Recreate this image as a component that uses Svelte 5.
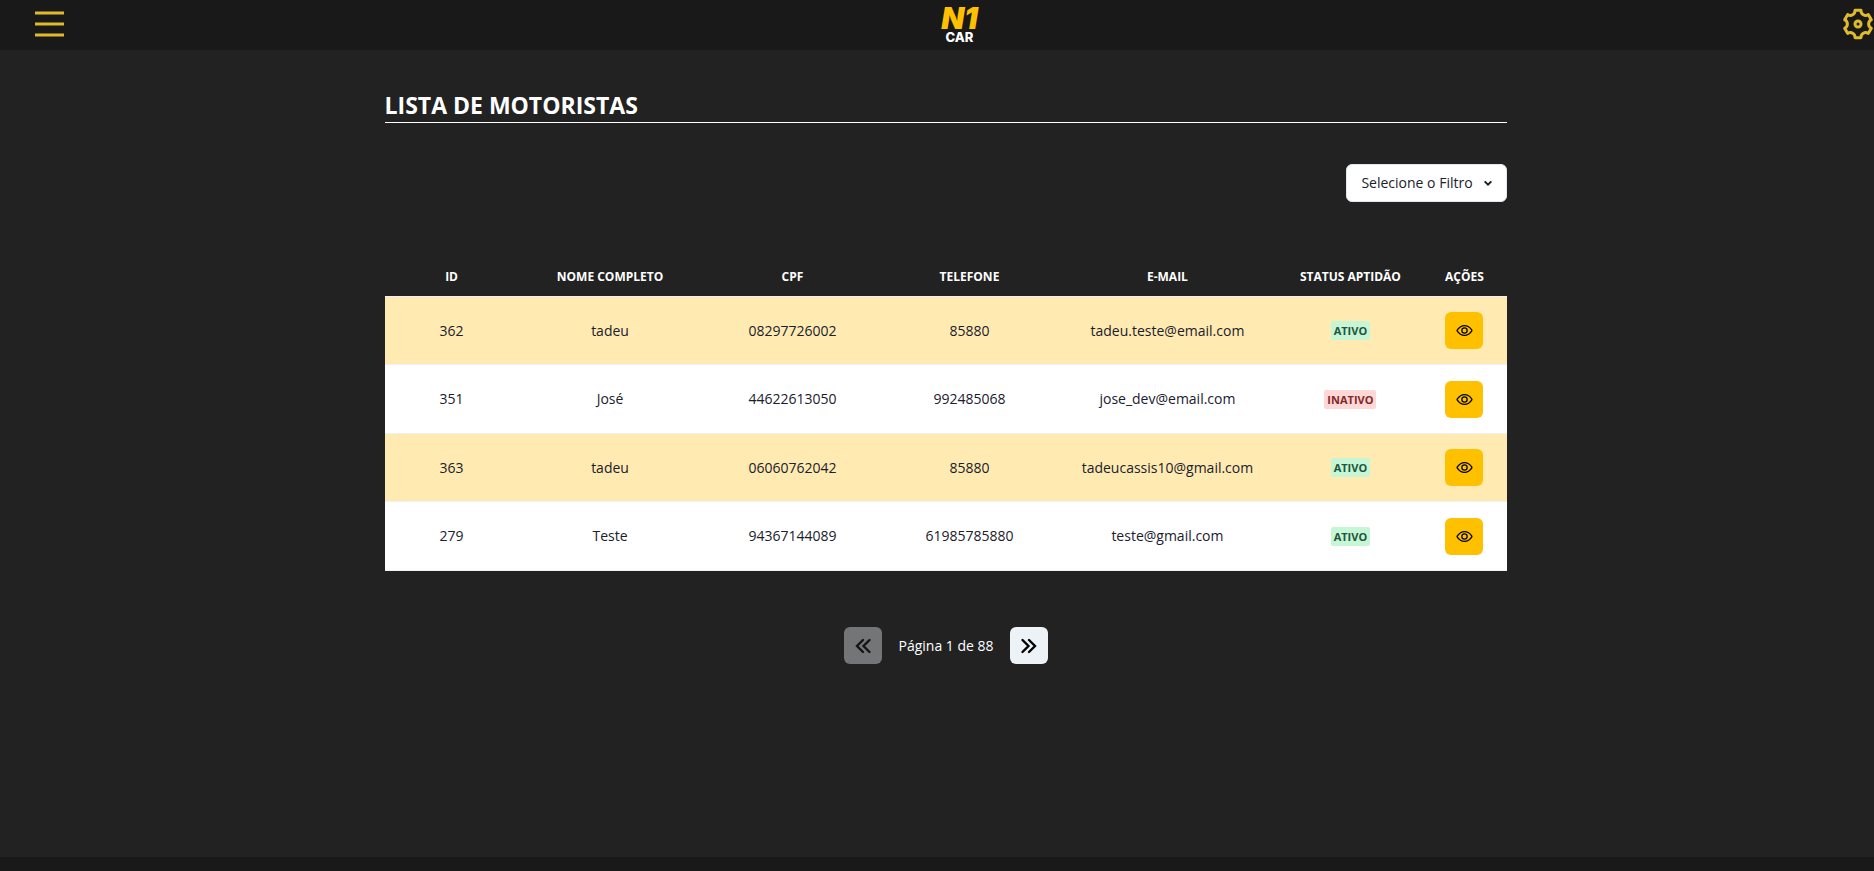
<script>
  const drivers = [
    { id: 362, name: 'tadeu', cpf: '08297726002', phone: '85880', email: 'tadeu.teste@email.com', active: true },
    { id: 351, name: 'José', cpf: '44622613050', phone: '992485068', email: 'jose_dev@email.com', active: false },
    { id: 363, name: 'tadeu', cpf: '06060762042', phone: '85880', email: 'tadeucassis10@gmail.com', active: true },
    { id: 279, name: 'Teste', cpf: '94367144089', phone: '61985785880', email: 'teste@gmail.com', active: true },
  ];
  const columns = [
    ['ID', 134],
    ['Nome completo', 183],
    ['CPF', 182],
    ['Telefone', 172],
    ['E-mail', 224],
    ['Status aptidão', 142],
    ['Ações', 86],
  ];
  const total = columns.reduce((sum, [, weight]) => sum + weight, 0);

  // Six-toothed gear outline centred on (16, 16)
  function polar(radius, degrees) {
    const a = (degrees * Math.PI) / 180;
    return `${(16 + radius * Math.cos(a)).toFixed(2)} ${(16 + radius * Math.sin(a)).toFixed(2)}`;
  }
  let gear = `M${polar(14, -102)}`;
  for (let t = -90; t < 270; t += 60) {
    gear += `L${polar(14, t + 12)}C${polar(10, t + 17)} ${polar(10, t + 43)} ${polar(14, t + 48)}`;
  }
  gear += 'Z';
</script>

<div class="page">
  <header>
    <button class="bare menu" aria-label="Menu">
      <svg width="32" height="28" viewBox="0 0 32 28" fill="none" stroke="currentColor" stroke-width="3">
        <path d="M2 3h29M2 14h29M2 25h29" />
      </svg>
    </button>
    <a class="logo" href="#inicio"><span class="n1">N1</span><span class="car">CAR</span></a>
    <button class="bare" aria-label="Configurações">
      <svg width="32" height="32" viewBox="0 0 32 32" fill="none" stroke="currentColor" stroke-width="3" stroke-linejoin="round">
        <path d={gear} />
        <circle cx="16" cy="16" r="3" />
      </svg>
    </button>
  </header>

  <main>
    <div class="content">
      <h1>LISTA DE MOTORISTAS</h1>

      <div class="filter">
        <select aria-label="Filtro">
          <option>Selecione o Filtro</option>
        </select>
        <svg width="16" height="16" viewBox="0 0 24 24" aria-hidden="true">
          <path d="m7 9.500 5 5 5-5" fill="none" stroke="currentColor" stroke-width="3" />
        </svg>
      </div>

      <table>
        <colgroup>
          {#each columns as [, weight]}
            <col style:width="{(weight / total) * 100}%" />
          {/each}
        </colgroup>
        <thead>
          <tr>
            {#each columns as [title]}
              <th scope="col">{title}</th>
            {/each}
          </tr>
        </thead>
        <tbody>
          {#each drivers as driver}
            <tr>
              <td>{driver.id}</td>
              <td>{driver.name}</td>
              <td>{driver.cpf}</td>
              <td>{driver.phone}</td>
              <td>{driver.email}</td>
              <td>
                <span class="badge" class:inactive={!driver.active}>{driver.active ? 'ATIVO' : 'INATIVO'}</span>
              </td>
              <td>
                <button class="icon view" aria-label="Visualizar">
                  <svg width="17" height="17" viewBox="0 0 512 512" fill="none" stroke="currentColor" stroke-width="38" stroke-linejoin="round">
                    <path d="M255.66 112c-77.94 0-157.89 45.11-220.83 135.33a16 16 0 00-.27 17.77C82.92 340.8 161.8 400 255.66 400c92.84 0 173.34-59.38 221.79-135.25a16.14 16.14 0 000-17.47C428.89 172.28 347.8 112 255.66 112z" />
                    <circle cx="256" cy="256" r="80" />
                  </svg>
                </button>
              </td>
            </tr>
          {/each}
        </tbody>
      </table>

      <nav aria-label="Paginação">
        <button class="icon" disabled aria-label="Página anterior">
          <svg width="18" height="18" viewBox="0 0 18 18" fill="none" stroke="currentColor" stroke-width="2.4" stroke-linecap="round">
            <path d="M9 3 3 9l6 6M15.500 3l-6 6 6 6" />
          </svg>
        </button>
        <span>Página 1 de 88</span>
        <button class="icon" aria-label="Próxima página">
          <svg width="18" height="18" viewBox="0 0 18 18" fill="none" stroke="currentColor" stroke-width="2.4" stroke-linecap="round">
            <path d="m2.500 3 6 6-6 6M9 3l6 6-6 6" />
          </svg>
        </button>
      </nav>
    </div>
  </main>

  <footer></footer>
</div>

<style>
  :global(body) {
    background: #222;
  }
  .page {
    display: flex;
    flex-direction: column;
    min-height: 100vh;
    font: 14px/24px 'Segoe UI', 'Open Sans', 'Noto Sans', sans-serif;
    color: #fff;
  }
  header {
    display: flex;
    align-items: center;
    justify-content: space-between;
    height: 50px;
    padding-left: 33px;
    background: #191919;
  }
  .bare {
    display: flex;
    padding: 0 0 2px;
    border: 0;
    background: none;
    color: #dfbb2c;
    cursor: pointer;
  }
  .menu {
    padding-right: 12px;
  }
  .logo {
    display: flex;
    flex-direction: column;
    align-items: center;
    text-decoration: none;
    font-family: Inter, sans-serif;
  }
  .n1 {
    font-size: 30px;
    line-height: 24px;
    font-weight: 900;
    font-style: italic;
    color: #ffc000;
  }
  .car {
    font-size: 13px;
    line-height: 14px;
    font-weight: 800;
    color: #fff;
  }
  main {
    flex: 1;
    padding-left: 18px;
  }
  .content {
    display: flex;
    flex-direction: column;
    width: 60.5%;
    margin: 0 auto;
    padding-top: 40px;
  }
  h1 {
    margin: 0;
    padding-bottom: 2px;
    border-bottom: 1px solid #fff;
    font-size: 23px;
    line-height: 30px;
    font-weight: 700;
  }
  .filter {
    position: relative;
    align-self: flex-end;
    margin: 41px 0 58px;
  }
  select {
    display: block;
    height: 38px;
    padding: 0 33px 0 14px;
    appearance: none;
    border: 1px solid #e2e8f0;
    border-radius: 6px;
    background: #fff;
    color: #1a202c;
    font: inherit;
    cursor: pointer;
  }
  .filter svg {
    position: absolute;
    right: 11px;
    top: 11px;
    color: #1a202c;
    pointer-events: none;
  }
  table {
    width: 100%;
    border-collapse: separate;
    border-spacing: 0;
    table-layout: fixed;
    text-align: center;
  }
  th,
  td {
    box-sizing: border-box;
    padding: 0;
    border-bottom: 1px solid #edf2f7;
    vertical-align: middle;
  }
  th {
    height: 37px;
    padding-bottom: 4px;
    font-size: 12px;
    line-height: 15px;
    text-transform: uppercase;
  }
  td {
    height: 69px;
    background: #fff;
    color: #1a202c;
  }
  tbody tr:nth-child(odd) td {
    height: 68px;
    background: #ffebb2;
  }
  .badge {
    display: block;
    width: fit-content;
    margin: 0 auto;
    padding: 0 3px;
    border-radius: 2px;
    background: #c6f6d5;
    color: #22543d;
    font-size: 11px;
    line-height: 19px;
    font-weight: 700;
  }
  .badge.inactive {
    background: #fed7d7;
    color: #822727;
  }
  .icon {
    display: inline-flex;
    align-items: center;
    justify-content: center;
    width: 38px;
    height: 37px;
    padding: 0;
    border: 0;
    border-radius: 6px;
    background: #edf2f7;
    color: #000;
    vertical-align: middle;
    cursor: pointer;
  }
  .icon:disabled {
    opacity: 0.4;
    cursor: not-allowed;
  }
  .view {
    background: #ffc000;
  }
  nav {
    display: flex;
    align-items: center;
    justify-content: center;
    gap: 16px;
    margin: 56px 0;
  }
  footer {
    height: 14px;
    background: #191919;
  }
</style>
